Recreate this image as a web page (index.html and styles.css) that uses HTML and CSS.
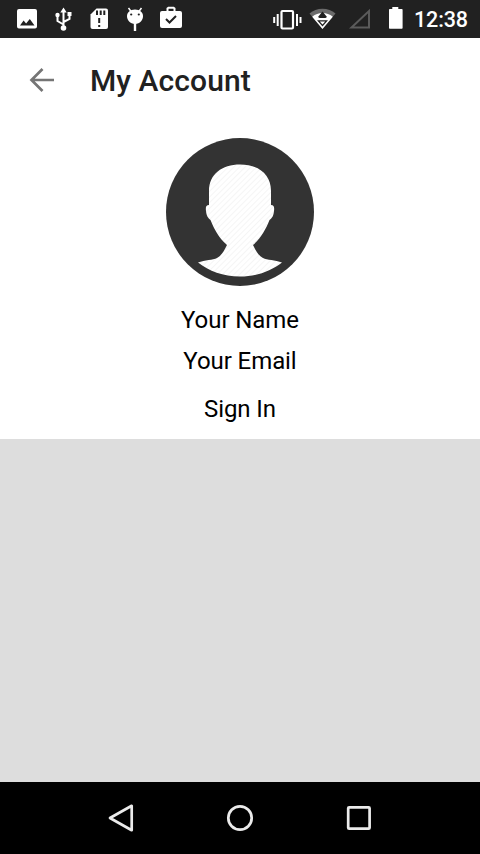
FILE: index.html
```html
<!DOCTYPE html>
<html lang="en">
<head>
    <meta charset="UTF-8">
    <meta name="viewport" content="width=device-width, initial-scale=1.0">
    <title>My Account</title>
    <link rel="stylesheet" href="styles.css">
</head>
<body>

<!-- Status bar -->
<div class="status-bar">
    <div class="notifications">
        <svg width="36" height="38" viewBox="0 0 36 38">
            <path fill="#fff" fill-rule="evenodd" d="M10 9h16a2 2 0 0 1 2 2v15.500a2 2 0 0 1-2 2H10a2 2 0 0 1-2-2V11a2 2 0 0 1 2-2zM11 25.500h14.500l-4.700-6.500-3.700 4.500-2.500-3z"/>
        </svg>
        <svg width="36" height="38" viewBox="0 0 36 38">
            <path fill="none" stroke="#fff" stroke-width="2" d="M18.500 28V11M18.500 24.500l-6-3.500v-5M18.500 22l6-3v-5"/>
            <path fill="#fff" d="M15.300 12.500l3.200-5 3.200 5zM22.500 12h4v4h-4z"/>
            <circle cx="12.500" cy="15" r="2.200" fill="#fff"/>
            <circle cx="18.500" cy="28" r="2.800" fill="#fff"/>
        </svg>
        <svg width="36" height="38" viewBox="0 0 36 38">
            <path fill="#fff" d="M15.500 8.500H25a2 2 0 0 1 2 2V27a2 2 0 0 1-2 2H11.500a2 2 0 0 1-2-2V14.500z"/>
            <path stroke="#212121" stroke-width="2" d="M16 10.500v4.500M19.700 10.500v4.500M23.300 10.500v4.500M18.200 18v5M18.200 25v2"/>
        </svg>
        <svg width="36" height="38" viewBox="0 0 36 38">
            <path stroke="#fff" stroke-width="1.500" d="M11.500 8l3 4M24.500 8l-3 4"/>
            <path fill="#fff" d="M18 9.500c5 0 8 3 8 6.500 0 4-3 8-8 8s-8-4-8-8c0-3.500 3-6.500 8-6.500z"/>
            <path stroke="#fff" stroke-width="2.400" d="M18 23v8"/>
            <circle cx="14.200" cy="14.500" r="1.100" fill="#212121"/>
            <circle cx="21.800" cy="14.500" r="1.100" fill="#212121"/>
        </svg>
        <svg width="36" height="38" viewBox="0 0 36 38">
            <rect x="7" y="11" width="22" height="17" rx="2" fill="#fff"/>
            <path fill="none" stroke="#fff" stroke-width="2" d="M14.500 12V8.500l1-.8h5l1 .8V12"/>
            <path fill="none" stroke="#212121" stroke-width="2" d="M13 19l3.500 3.500 6.500-6.500"/>
        </svg>
    </div>
    <div class="system">
        <svg width="36" height="38" viewBox="0 0 36 38">
            <rect x="12.500" y="11" width="11.500" height="17.500" rx="1" fill="none" stroke="#fff" stroke-width="2.200"/>
            <path stroke="#fff" stroke-width="2" d="M8.700 14v12M28 14v12M5.200 17v6M31.500 17v6"/>
        </svg>
        <svg width="36" height="38" viewBox="0 0 36 38">
            <path fill="#6b6b6b" d="M4.500 13.500C8 10.500 12.500 8.800 17.500 8.800s9.500 1.700 13 4.700l-13 15.500z"/>
            <path fill="#fff" d="M17.500 29L7.200 16.800c3-2.500 6.500-3.700 10.300-3.700s7.300 1.200 10.300 3.700z"/>
            <path fill="#212121" d="M17.500 11.500l4.500 5.500-1.500 1h-6l-1.500-1zM12 20.200h11l-5.500 6.300z"/>
            <path fill="#fff" d="M14.800 21.500h5.400l-2.700 3z"/>
        </svg>
        <svg width="42" height="38" viewBox="0 0 42 38">
            <path fill="none" stroke="#5b5b5b" stroke-width="2" d="M10.500 27.500h17.500V11z"/>
        </svg>
        <svg width="28" height="38" viewBox="2.700 0 28 38">
            <path fill="#fff" d="M12 7h6v2h3.500a.8.8 0 0 1 .8.800V28a.8.8 0 0 1-.8.800h-12a.8.8 0 0 1-.8-.8V9.800a.8.8 0 0 1 .8-.8H12z"/>
        </svg>
        <span class="clock">12:38</span>
    </div>
</div>

<!-- Toolbar -->
<header class="toolbar">
    <svg class="back" width="26" height="26" viewBox="0 0 26 26">
        <path fill="none" stroke="#757575" stroke-width="2.700" d="M25 13H3M13.500 2L2.500 13l11 11"/>
    </svg>
    <h1>My Account</h1>
</header>

<!-- Profile -->
<main class="profile">
    <svg class="avatar" width="148" height="148" viewBox="0 0 148 148">
        <defs>
            <pattern id="stripes" width="4" height="4" patternUnits="userSpaceOnUse" patternTransform="rotate(45)">
                <rect width="4" height="4" fill="#fff"/>
                <rect width="1" height="4" fill="#f5f5f5"/>
            </pattern>
        </defs>
        <circle cx="74" cy="74" r="74" fill="#333"/>
        <path fill="url(#stripes)" d="M74 26.500C92 26.500 105 36 105 53V67C108 67 108.500 69 108 73C107.500 78 106 80 103.500 82C100 91 95 100 87 107C90 113 92 117 97 120C101 122 109 122 116 124.500C105 133 91 138.500 74 138.500S43 133 32 124.500C39 122 47 122 51 120C56 117 58 113 61 107C53 100 48 91 44.500 82C42 80 40.500 78 40 73C39.500 69 40 67 43 67V53C43 36 56 26.500 74 26.500z"/>
    </svg>
    <p class="name">Your Name</p>
    <p class="email">Your Email</p>
    <p class="sign-in">Sign In</p>
</main>

<!-- Navigation bar -->
<nav class="nav-bar">
    <svg width="28" height="30" viewBox="0 0 28 30">
        <path fill="none" stroke="#ebebeb" stroke-width="2.700" stroke-linejoin="round" d="M24.700 2.800v24.400L3 15z"/>
    </svg>
    <svg width="28" height="30" viewBox="0 0 28 30">
        <circle cx="14" cy="15" r="11.700" fill="none" stroke="#ebebeb" stroke-width="2.700"/>
    </svg>
    <svg width="28" height="30" viewBox="0 0 28 30">
        <rect x="3.200" y="4.300" width="21.400" height="21.400" rx="1" fill="none" stroke="#ebebeb" stroke-width="2.700"/>
    </svg>
</nav>

</body>
</html>
```
FILE: styles.css
```css
body {
    font-family: Roboto, "Liberation Sans", sans-serif;
    margin: 0;
    height: 854px;
    display: flex;
    flex-direction: column;
    background-color: #ddd;
    color: #000;
    overflow: hidden;
}
svg {
    display: block;
    flex: none;
}
.status-bar {
    display: flex;
    justify-content: space-between;
    height: 38px;
    padding: 0 12px 0 9px;
    background-color: #212121;
    color: #fff;
}
.notifications,
.system {
    display: flex;
}
.clock {
    width: 57px;
    font-size: 21.5px;
    font-weight: 500;
    line-height: 40px;
    letter-spacing: -0.1px;
    text-align: right;
}
.toolbar {
    display: flex;
    align-items: center;
    height: 84px;
    padding-left: 29px;
    background-color: #fff;
}
.toolbar h1 {
    margin: 2px 0 0 35px;
    font-size: 30px;
    font-weight: 500;
    line-height: 36px;
    letter-spacing: 0.08px;
    color: #212121;
}
.profile {
    display: flex;
    flex-direction: column;
    align-items: center;
    height: 301px;
    padding-top: 16px;
    background-color: #fff;
}
.profile p {
    margin: 0;
    font-size: 24px;
    line-height: 28px;
    letter-spacing: -0.08px;
}
.profile .name {
    margin-top: 20px;
}
.profile .email {
    margin-top: 13px;
}
.profile .sign-in {
    margin-top: 20px;
}
.nav-bar {
    display: flex;
    justify-content: center;
    align-items: center;
    gap: 91px;
    height: 72px;
    margin-top: auto;
    background-color: #000;
}
```
